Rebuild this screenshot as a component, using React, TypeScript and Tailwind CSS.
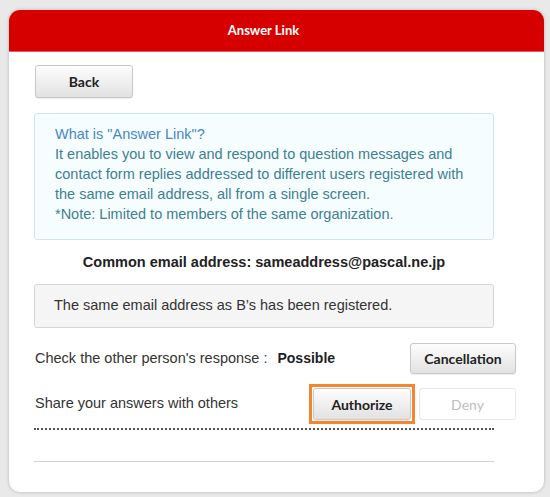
import React from "react";

const body = { fontFamily: '"Liberation Sans", Arial, sans-serif' };
const lato = { fontFamily: "Lato, sans-serif" };

function GrayButton({ label, className }: { label: string; className: string }) {
  return (
    <button
      className={`flex items-center justify-center rounded-[3px] border border-[#c8c8c8] bg-gradient-to-b from-[#fdfdfd] to-[#e2e2e2] text-[14px] font-bold text-[#222] shadow-[0_1px_1px_rgba(0,0,0,0.08)] ${className}`}
      style={lato}
    >
      {label}
    </button>
  );
}

export default function App() {
  return (
    <div className="h-[497px] w-[550px] bg-[#e9e9e9] pl-[8px] pt-[9px]" style={body}>
      <div className="h-[484px] w-[537px] overflow-hidden rounded-[12px] border border-[#d4d4d4] bg-white shadow-[0_0_3px_rgba(0,0,0,0.12)]">
        {/* Header */}
        <div className="flex h-[42px] items-center justify-center border-b border-[#f05a5a] bg-[#d70000] pl-[25px] pr-[51px]">
          <span className="text-[13px] font-bold text-white" style={lato}>
            Answer Link
          </span>
        </div>

        <div className="pl-[25px] pr-[50px] pt-[13px]">
          <GrayButton label="Back" className="ml-px h-[33px] w-[98px]" />

          {/* Info */}
          <div className="mt-[15px] h-[127px] rounded-[3px] border border-[#cde7ee] bg-[#f5fdfe] pl-[20px] pt-[10px] text-[14.5px] leading-[20px] text-[#3f7f92]">
            <div className="text-[#4a86c5]">What is "Answer Link"?</div>
            <div>It enables you to view and respond to question messages and</div>
            <div>contact form replies addressed to different users registered with</div>
            <div>the same email address, all from a single screen.</div>
            <div>*Note: Limited to members of the same organization.</div>
          </div>

          <div className="mt-[12px] text-center text-[14.5px] font-bold leading-[20px] text-[#222]">
            Common email address: sameaddress@pascal.ne.jp
          </div>

          <div className="mt-[12px] flex h-[44px] items-center rounded-[3px] border border-[#d6d6d6] bg-[#f5f5f5] pl-[19px] text-[14.5px] text-[#333]">
            The same email address as B’s has been registered.
          </div>

          {/* Response row */}
          <div className="mt-[15px] flex h-[31px] items-center">
            <span className="ml-px text-[14.5px] text-[#333]">Check the other person's response :</span>
            <span className="ml-[10px] text-[14px] font-bold text-[#222]">Possible</span>
            <GrayButton label="Cancellation" className="ml-auto mr-[-22px] h-[31px] w-[106px]" />
          </div>

          {/* Share row */}
          <div className="mt-[10px] flex h-[40px] items-center">
            <span className="ml-px text-[14.5px] text-[#333]">Share your answers with others</span>
            <div className="ml-auto mr-[-22px] flex items-center gap-[4px]">
              <div className="border-[3px] border-[#f5862d] p-px">
                <GrayButton label="Authorize" className="h-[32px] w-[98px]" />
              </div>
              <button
                className="flex h-[32px] w-[97px] items-center justify-center rounded-[3px] border border-[#e6e6e6] bg-white text-[14px] text-[#bdbdbd]"
                style={lato}
              >
                Deny
              </button>
            </div>
          </div>

          <div className="mt-[4px] border-b-2 border-dotted border-[#555]" />
          <div className="mt-[31px] border-b border-[#d0d0d0]" />
        </div>
      </div>
    </div>
  );
}
